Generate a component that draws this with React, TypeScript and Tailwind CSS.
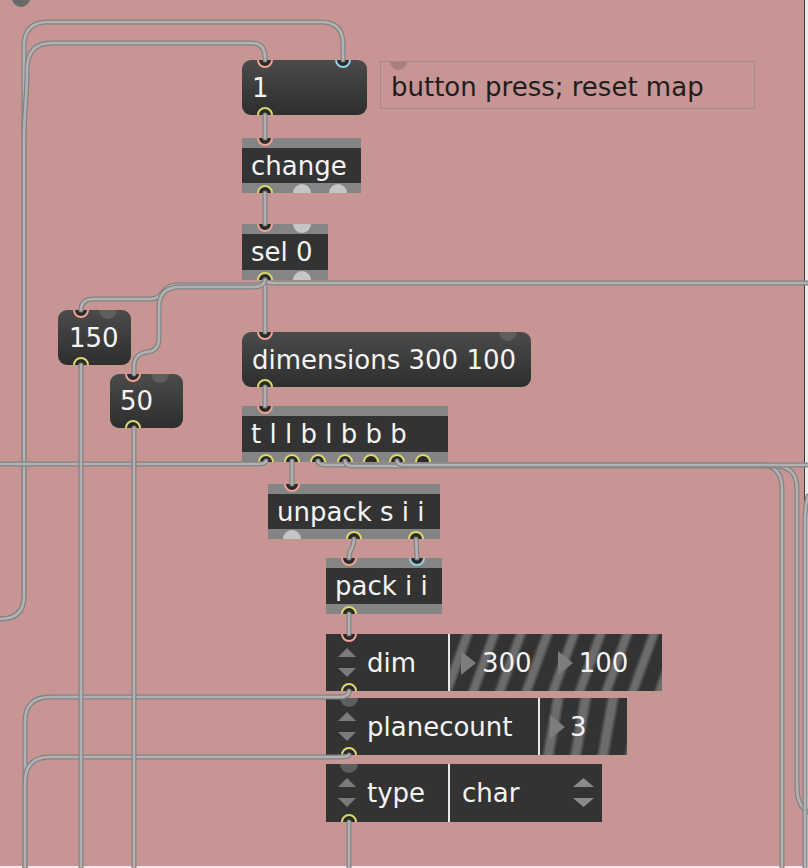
import React from "react";

type PortKind = "hot" | "cold" | "out" | "light" | "dark";
type Port = [number, PortKind];

const portStyle: Record<PortKind, string> = {
  hot: "w-4 h-4 border-2 border-[#f0a393] bg-[#2a2a2a]",
  cold: "w-4 h-4 border-2 border-[#92d3e6] bg-[#2a2a2a]",
  out: "w-4 h-4 border-2 border-[#d9d96c] bg-[#2a2a2a]",
  light: "w-[18px] h-[18px] bg-[#c6c6c6]",
  dark: "w-[18px] h-[18px] bg-[#5e5e5e]",
};

// x values are relative to the box's left edge
function Ports({ list, side }: { list: Port[]; side: "top" | "bottom" }) {
  return (
    <>
      {list.map(([x, kind], i) => {
        const d = kind === "light" || kind === "dark" ? 18 : 16;
        return (
          <span
            key={i}
            className={`absolute rounded-full ${portStyle[kind]}`}
            style={{ left: x - d / 2, [side]: -d / 2 }}
          />
        );
      })}
    </>
  );
}

const font = "font-['DejaVu_Sans',sans-serif] text-[26px] leading-none";

function Obj({ pos, text, ins, outs }: { pos: string; text: string; ins: Port[]; outs: Port[] }) {
  return (
    <div className={`absolute overflow-hidden flex flex-col bg-[#333333] ${pos}`}>
      <div className="h-[10px] bg-[#858585]" />
      <div className={`flex-1 flex items-center pl-[9px] text-[#f4f4f4] whitespace-pre ${font}`}>{text}</div>
      <div className="h-[10px] bg-[#858585]" />
      <Ports list={ins} side="top" />
      <Ports list={outs} side="bottom" />
    </div>
  );
}

function Msg({ pos, text, ins, outs, pad = "pl-[10px]" }: { pos: string; text: string; ins: Port[]; outs: Port[]; pad?: string }) {
  return (
    <div className={`absolute overflow-hidden rounded-[9px] bg-linear-to-b from-[#4b4b4b] to-[#2e2e2e] flex items-center text-[#f4f4f4] ${pad} ${font} ${pos}`}>
      {text}
      <Ports list={ins} side="top" />
      <Ports list={outs} side="bottom" />
    </div>
  );
}

function Arrows({ w = 18, color = "#7b7b7b" }: { w?: number; color?: string }) {
  return (
    <svg width={w} height="30" viewBox={`0 0 ${w} 30`}>
      <polygon points={`0,9 ${w / 2},0 ${w},9`} fill={color} />
      <polygon points={`0,20 ${w},20 ${w / 2},29`} fill={color} />
    </svg>
  );
}

function Play() {
  return (
    <svg width="15" height="24" viewBox="0 0 15 24" className="shrink-0">
      <polygon points="0,0 15,12 0,24" fill="#7d7d7d" />
    </svg>
  );
}

function Attr({
  pos,
  label,
  labelW,
  value,
  ins,
  outs,
}: {
  pos: string;
  label: string;
  labelW: string;
  value: React.ReactNode;
  ins: Port[];
  outs: Port[];
}) {
  return (
    <div className={`absolute overflow-hidden flex bg-[#333333] text-[#f4f4f4] ${font} ${pos}`}>
      <div className={`flex items-center shrink-0 ${labelW}`}>
        <div className="w-[41px] flex justify-center pl-[1px]">
          <Arrows />
        </div>
        <span>{label}</span>
      </div>
      <div className="w-[2px] bg-[#e8e8e8] shrink-0" />
      {value}
      <Ports list={ins} side="top" />
      <Ports list={outs} side="bottom" />
    </div>
  );
}

const cords = [
  "M343 60 L343 44 Q343 22 321 22 L48 22 Q24 22 24 46 L24 596 Q24 619 0 619",
  "M265 60 L265 57 Q265 43 251 43 L52 43 Q27 43 27 70 C27 100 24 110 24 140 L24 596 Q24 619 0 619",
  "M265 115 L265 138",
  "M265 193 L265 224",
  "M265 280 L265 332",
  "M265 280 Q266 283 276 283 L808 283",
  "M265 280 Q264 285 254 285 L176 285 C162 285 164 299 150 299 L94 299 Q81 299 81 310",
  "M265 280 Q264 287 254 287 L180 287 Q159 287 159 307 L159 338 Q159 351 147 352 Q134 354 134 366 L134 374",
  "M265 387 L265 406",
  "M266 461 Q266 464 257 464 L0 464",
  "M292 461 L292 484",
  "M318 461 Q318 465 327 465 L760 465 Q782 465 782 489 L782 868",
  "M345 461 Q345 466 354 466 L775 466 Q797 466 797 489 L797 786 Q797 806 808 812",
  "M397 461 Q397 465 406 465 L808 465",
  "M808 496 Q805 506 805 522 L805 868",
  "M354 539 C354 550 349 547 349 558",
  "M416 539 L417 558",
  "M349 614 L349 634",
  "M349 691 Q349 697 339 697 L50 697 Q25 697 25 722 L25 868",
  "M349 755 Q349 757 339 757 L50 757 Q25 757 25 782 L25 868",
  "M349 822 L349 868",
  "M81 365 L81 868",
  "M134 428 L134 868",
];

export default function App() {
  return (
    <div className="relative w-[808px] h-[868px] overflow-hidden bg-[#c79594]">
      {/* window edges */}
      <div className="absolute left-[804px] top-0 w-[4px] h-full bg-[#ebebeb] border-l border-[#3a3a3a]" />
      <div className="absolute left-0 bottom-0 w-full h-[2px] bg-[#ebebeb]" />
      <span className="absolute left-[12px] -top-[11px] w-[18px] h-[18px] rounded-full bg-[#6a6a6a]" />

      <Msg pos="left-[242px] top-[60px] w-[125px] h-[55px]" text="1" ins={[[23, "hot"], [101, "cold"]]} outs={[[23, "out"]]} />

      <div className={`absolute overflow-hidden left-[380px] top-[61px] w-[375px] h-[48px] border border-[#a38a8a] flex items-center pl-[10px] pt-[3px] text-[#1e1e1e] ${font}`}>
        <span className="absolute left-[9px] -top-[9px] w-[17px] h-[17px] rounded-full bg-[#a97e7d]" />
        button press; reset map
      </div>

      <Obj pos="left-[242px] top-[138px] w-[119px] h-[55px]" text="change" ins={[[23, "hot"]]} outs={[[23, "out"], [60, "light"], [96, "light"]]} />
      <Obj pos="left-[242px] top-[224px] w-[86px] h-[56px]" text="sel 0" ins={[[23, "hot"], [60, "light"]]} outs={[[23, "out"], [60, "light"]]} />

      <Msg pos="left-[58px] top-[310px] w-[73px] h-[55px]" pad="pl-[11px]" text="150" ins={[[23, "hot"], [50, "dark"]]} outs={[[23, "out"]]} />
      <Msg pos="left-[110px] top-[374px] w-[73px] h-[54px]" pad="pl-[10px]" text="50" ins={[[23, "hot"], [50, "dark"]]} outs={[[23, "out"]]} />

      <Msg pos="left-[242px] top-[332px] w-[289px] h-[55px]" text="dimensions 300 100" ins={[[23, "hot"], [266, "dark"]]} outs={[[23, "out"]]} />

      <Obj
        pos="left-[242px] top-[406px] w-[206px] h-[56px]"
        text="t l l b l b b b"
        ins={[[23, "hot"]]}
        outs={[[24, "out"], [50, "out"], [76, "out"], [103, "out"], [129, "out"], [155, "out"], [181, "out"]]}
      />

      <Obj pos="left-[268px] top-[484px] w-[172px] h-[55px]" text="unpack s i i" ins={[[24, "hot"]]} outs={[[24, "light"], [86, "out"], [148, "out"]]} />
      <Obj pos="left-[326px] top-[558px] w-[116px] h-[56px]" text="pack i i" ins={[[23, "hot"], [91, "cold"]]} outs={[[23, "out"]]} />

      <Attr
        pos="left-[326px] top-[634px] w-[336px] h-[57px]"
        label="dim"
        labelW="w-[122px]"
        ins={[[23, "hot"]]}
        outs={[[23, "out"]]}
        value={
          <div className="flex-1 flex items-center pl-[11px] bg-[repeating-linear-gradient(110deg,#333333_0px,#333333_10px,#6c6c6c_14px,#6c6c6c_19px,#333333_23px,#333333_25px)]">
            <Play />
            <span className="ml-[6px]">300</span>
            <span className="ml-[26px]"><Play /></span>
            <span className="ml-[6px]">100</span>
          </div>
        }
      />

      <Attr
        pos="left-[326px] top-[698px] w-[301px] h-[57px]"
        label="planecount"
        labelW="w-[212px]"
        ins={[[23, "dark"]]}
        outs={[[23, "out"]]}
        value={
          <div className="flex-1 flex items-center pl-[10px] bg-[repeating-linear-gradient(100deg,#333333_0px,#333333_11px,#6c6c6c_15px,#6c6c6c_21px,#333333_25px,#333333_27px)]">
            <Play />
            <span className="ml-[5px]">3</span>
          </div>
        }
      />

      <Attr
        pos="left-[326px] top-[764px] w-[276px] h-[58px]"
        label="type"
        labelW="w-[122px]"
        ins={[[23, "dark"]]}
        outs={[[23, "out"]]}
        value={
          <div className="flex-1 flex items-center justify-between pl-[12px] pr-[8px]">
            <span>char</span>
            <Arrows w={21} color="#8a8a8a" />
          </div>
        }
      />

      <svg className="absolute left-0 top-0 pointer-events-none" width="808" height="868" viewBox="0 0 808 868" fill="none">
        {cords.map((d, i) => (
          <g key={i}>
            <path d={d} stroke="#828282" strokeWidth="5" strokeLinecap="round" strokeLinejoin="round" />
            <path d={d} stroke="#b2b2b2" strokeWidth="2.6" strokeLinecap="round" strokeLinejoin="round" />
          </g>
        ))}
      </svg>
    </div>
  );
}
